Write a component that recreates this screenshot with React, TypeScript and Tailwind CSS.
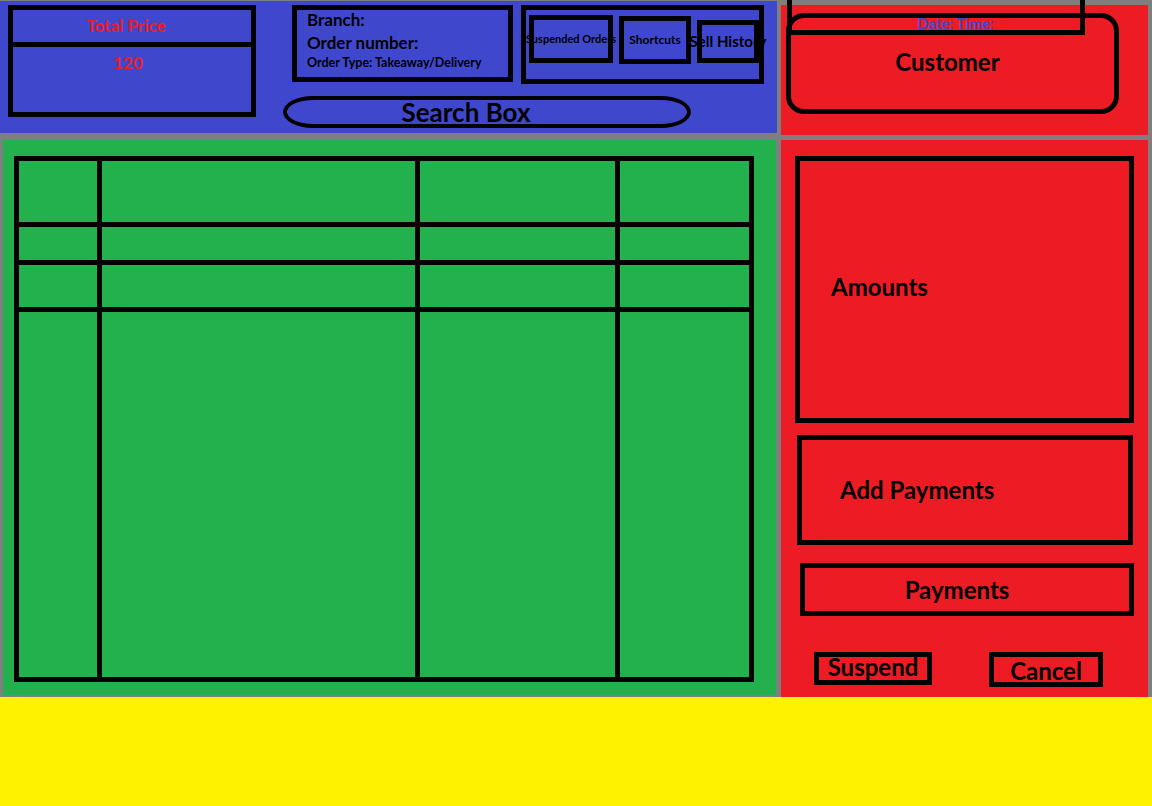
import React from 'react';

const rows = [0, 1, 2, 3];
const cols = [0, 1, 2, 3];

function OrderTable() {
  return (
    <div className="ml-[11px] mt-[16px] w-[740px] h-[526px] border-[5px] border-black grid grid-cols-[83px_318px_200px_1fr] grid-rows-[66px_38px_47px_1fr]">
      {rows.map((r) =>
        cols.map((c) => (
          <div
            key={`${r}-${c}`}
            className={`${c < 3 ? 'border-r-[5px]' : ''} ${r < 3 ? 'border-b-[5px]' : ''} border-black`}
          />
        ))
      )}
    </div>
  );
}

function Header() {
  return (
    <div className="mt-[1px] h-[132px] w-[777px] bg-[#3f48cc] flex items-start">
      {/* total price */}
      <div className="ml-[8px] mt-[4px] w-[248px] h-[112px] border-[5px] border-black flex flex-col">
        <div className="h-[37px] border-b-[5px] border-black flex items-center justify-center pr-[12px] text-[17px] font-bold text-[#ed1c24]">
          Total Price
        </div>
        <div className="flex-1 flex justify-center pt-[6px] pr-[8px] text-[17px] leading-[20px] font-bold text-[#ed1c24]">
          120
        </div>
      </div>

      <div className="ml-[27px] mt-[4px] flex flex-col">
        <div className="flex items-start">
          <div className="ml-[9px] w-[221px] h-[77px] border-[5px] border-black pl-[10px] font-bold text-black">
            <div className="text-[17px] leading-[20px]">Branch:</div>
            <div className="mt-[3px] text-[17px] leading-[20px]">Order number:</div>
            <div className="mt-[3px] text-[12.5px] leading-[14px]">Order Type: Takeaway/Delivery</div>
          </div>

          <div className="ml-[8px] w-[243px] h-[79px] border-[5px] border-black flex items-start">
            <div className="ml-[3px] mt-[5px] w-[84px] h-[48px] border-[5px] border-black flex items-center justify-center whitespace-nowrap text-[11px] font-bold">
              Suspended Orders
            </div>
            <div className="ml-[6px] mt-[6px] w-[72px] h-[48px] border-[5px] border-black flex items-center justify-center whitespace-nowrap text-[12px] font-bold">
              Shortcuts
            </div>
            <div className="ml-[6px] mt-[10px] w-[62px] h-[43px] border-[5px] border-black flex items-center justify-center whitespace-nowrap text-[15px] font-bold">
              Sell History
            </div>
          </div>
        </div>

        <div className="mt-[12px] w-[408px] h-[32px] border-[4px] border-black rounded-[30px/16px] flex items-center justify-center pr-[42px] text-[26px] font-bold">
          Search Box
        </div>
      </div>
    </div>
  );
}

function CustomerPanel() {
  return (
    <div className="relative mt-[5px] h-[130px] bg-[#ed1c24]">
      <div className="ml-[5px] mt-[8px] w-[333px] h-[101px] border-[5px] border-black rounded-[18px] flex items-center justify-center pr-[10px] pb-[4px] text-[24px] font-bold">
        Customer
      </div>
      <div className="absolute left-[6px] -top-[5px] w-[298px] h-[35px] border-[5px] border-t-0 border-black pl-[125px] pt-[14px] text-[15px] leading-[18px] font-bold text-[#3f48cc] whitespace-nowrap">
        Date: Time:
      </div>
    </div>
  );
}

function PaymentPanel() {
  return (
    <div className="mt-[5px] h-[557px] bg-[#ed1c24] flex flex-col items-start font-bold text-black">
      <div className="ml-[14px] mt-[16px] w-[339px] h-[267px] border-[5px] border-black flex items-center pl-[31px] pb-[6px] text-[24px]">
        Amounts
      </div>
      <div className="ml-[16px] mt-[12px] w-[336px] h-[110px] border-[5px] border-black flex items-center pl-[38px] text-[24px]">
        Add Payments
      </div>
      <div className="ml-[19px] mt-[18px] w-[334px] h-[53px] border-[5px] border-black flex items-center justify-center pr-[20px] text-[24px]">
        Payments
      </div>
      <div className="ml-[33px] mt-[36px] flex items-start">
        <div className="w-[118px] h-[33px] border-[5px] border-black flex justify-center text-[24px] leading-[20px]">
          Suspend
        </div>
        <div className="ml-[57px] w-[114px] h-[35px] border-[5px] border-black flex justify-center pt-[4px] text-[24px] leading-[20px]">
          Cancel
        </div>
      </div>
    </div>
  );
}

export default function App() {
  return (
    <div className="w-[1152px] h-[806px] bg-[#7f7f7f] overflow-hidden flex flex-col font-['Lato',sans-serif]">
      <div className="flex h-[697px]">
        <div className="w-[777px] flex flex-col">
          <Header />
          <div className="ml-[3px] mt-[7px] w-[773px] h-[555px] bg-[#22b14c]">
            <OrderTable />
          </div>
        </div>
        <div className="ml-[4px] w-[367px] flex flex-col">
          <CustomerPanel />
          <PaymentPanel />
        </div>
      </div>
      <div className="flex-1 bg-[#fff200]" />
    </div>
  );
}
